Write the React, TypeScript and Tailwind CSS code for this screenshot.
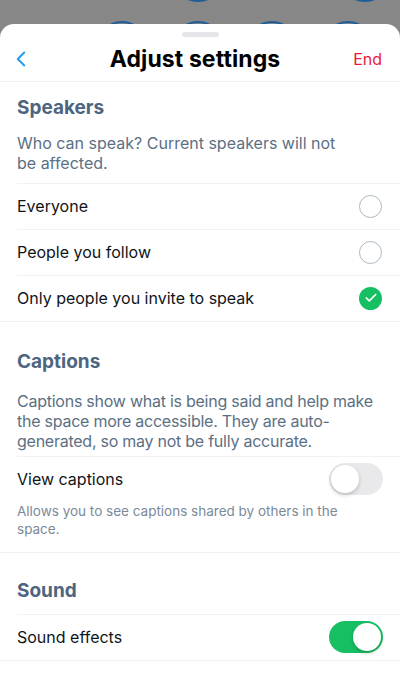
import { ChevronLeft, Check } from 'lucide-react'

const font = { fontFamily: "Inter, 'Noto Sans', sans-serif" }

function Radio({ checked }: { checked?: boolean }) {
  if (checked) {
    return (
      <span className="flex h-[23px] w-[23px] items-center justify-center rounded-full bg-[#17bf63]">
        <Check className="h-[14px] w-[14px] text-white" strokeWidth={3} />
      </span>
    )
  }
  return <span className="block h-[23px] w-[23px] rounded-full border-[1.5px] border-[#aab8c2]" />
}

function Toggle({ on }: { on?: boolean }) {
  return (
    <span
      className={`flex h-[32px] w-[54px] items-center rounded-full p-[2px] ${
        on ? 'justify-end bg-[#17bf63]' : 'justify-start bg-[#e9e9eb]'
      }`}
    >
      <span className="block h-[28px] w-[28px] rounded-full bg-white shadow-[0_2px_4px_rgba(0,0,0,0.2)]" />
    </span>
  )
}

const speakerOptions = [
  { label: 'Everyone', checked: false },
  { label: 'People you follow', checked: false },
  { label: 'Only people you invite to speak', checked: true },
]

export default function App() {
  return (
    <div className="relative h-[690px] w-[400px] overflow-hidden bg-[#878787]" style={font}>
      {/* backdrop avatars peeking above the sheet */}
      <svg className="absolute left-0 top-0" width="400" height="30">
        {[198, 365].map((cx) => (
          <circle key={cx} cx={cx} cy={-24} r={25} fill="none" stroke="#1f5d99" strokeWidth="2" />
        ))}
        {[122, 198, 272, 348].map((cx) => (
          <circle key={cx} cx={cx} cy={47} r={25} fill="none" stroke="#1f5d99" strokeWidth="2" />
        ))}
      </svg>

      <div className="relative mt-[24px] h-[666px] rounded-t-[14px] bg-white">
        <div className="flex justify-center pt-[8px]">
          <span className="block h-[5px] w-[37px] rounded-full bg-[#e6e6ea]" />
        </div>

        <div className="grid h-[45px] grid-cols-[1fr_auto_1fr] items-center border-b border-[#eff3f4] pl-[8px] pr-[18px]">
          <ChevronLeft className="h-[26px] w-[26px] text-[#1d9bf0]" strokeWidth={1.75} />
          <h1 className="text-[23px] font-bold tracking-[0.1px] text-black">Adjust settings</h1>
          <span className="justify-self-end text-[16px] text-[#e8193c]">End</span>
        </div>

        <section>
          <h2 className="px-[17px] pt-[12px] text-[19px] font-bold text-[#4d6580]">Speakers</h2>
          <p className="px-[17px] pb-[10px] pr-[60px] pt-[10px] text-[16px] leading-[20px] text-[#5b7083]">
            Who can speak? Current speakers will not be affected.
          </p>
          <div className="ml-[17px] border-t border-[#eff3f4]" />
          {speakerOptions.map((opt, i) => (
            <div
              key={opt.label}
              className={`flex h-[46px] items-center justify-between pr-[18px] ${
                i < speakerOptions.length - 1 ? 'ml-[17px] border-b border-[#eff3f4]' : 'pl-[17px] border-b border-[#eff3f4]'
              }`}
            >
              <span className="text-[16px] text-[#0f1419]">{opt.label}</span>
              <Radio checked={opt.checked} />
            </div>
          ))}
        </section>

        <section>
          <h2 className="px-[17px] pt-[26px] text-[19px] font-bold text-[#4d6580]">Captions</h2>
          <p className="px-[17px] pb-[5px] pt-[15px] text-[16px] leading-[20px] tracking-[-0.25px] text-[#5b7083]">
            Captions show what is being said and help make the space more accessible. They are auto-
            <br />
            generated, so may not be fully accurate.
          </p>
          <div className="ml-[17px] border-t border-[#eff3f4]" />
          <div className="border-b border-[#eff3f4] pb-[14px] pl-[17px] pr-[17px] pt-[6px]">
            <div className="flex items-center justify-between">
              <span className="text-[16px] text-[#0f1419]">View captions</span>
              <Toggle />
            </div>
            <p className="mt-[7px] pr-[20px] text-[13.5px] leading-[18px] text-[#7b8a99]">
              Allows you to see captions shared by others in the space.
            </p>
          </div>
        </section>

        <section>
          <h2 className="px-[17px] pt-[24px] pb-[8px] text-[19px] font-bold text-[#4d6580]">Sound</h2>
          <div className="ml-[17px] border-t border-[#eff3f4]" />
          <div className="flex h-[46px] items-center justify-between border-b border-[#eff3f4] pl-[17px] pr-[17px]">
            <span className="text-[16px] text-[#0f1419]">Sound effects</span>
            <Toggle on />
          </div>
        </section>
      </div>
    </div>
  )
}
